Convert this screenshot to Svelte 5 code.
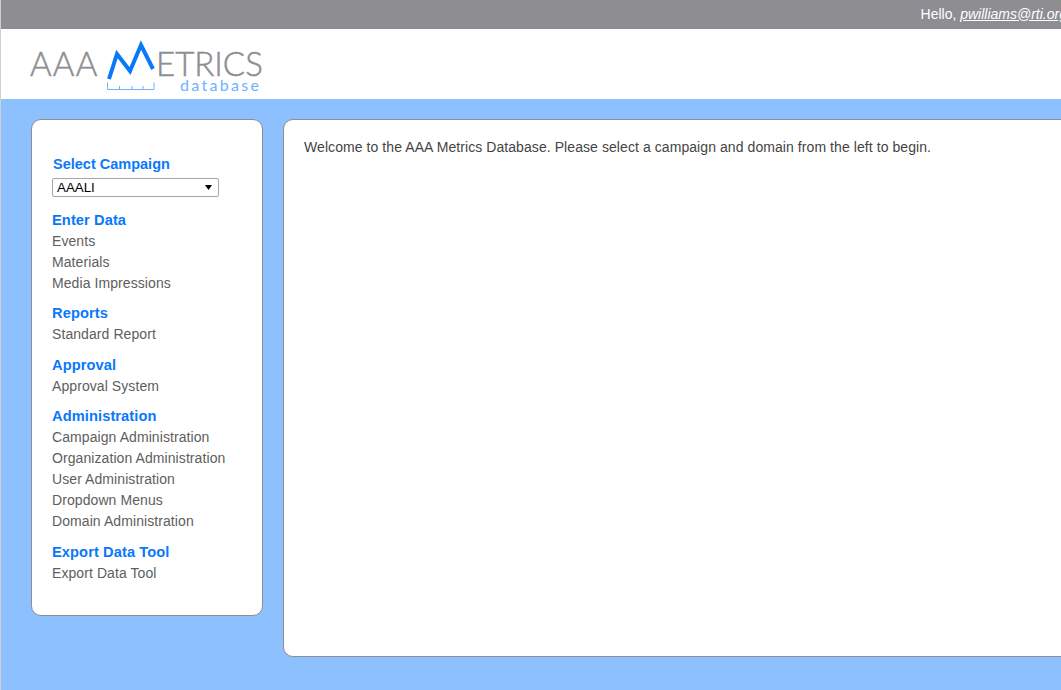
<script lang="ts">
	const sections = [
		{ title: 'Enter Data', links: ['Events', 'Materials', 'Media Impressions'] },
		{ title: 'Reports', links: ['Standard Report'] },
		{ title: 'Approval', links: ['Approval System'] },
		{
			title: 'Administration',
			links: [
				'Campaign Administration',
				'Organization Administration',
				'User Administration',
				'Dropdown Menus',
				'Domain Administration'
			]
		},
		{ title: 'Export Data Tool', links: ['Export Data Tool'] }
	];
</script>

<div class="page">
	<div class="topbar">
		<span class="hello">Hello, <a href="#user">pwilliams@rti.org</a></span>
	</div>

	<header class="header">
		<svg class="logo" width="240" height="60" viewBox="0 0 240 60" aria-label="AAA Metrics database">
			<text x="0" y="34.5" class="grey aaa">AAA</text>
			<text x="126" y="34.5" class="grey">ETRICS</text>
			<text x="150" y="49.5" class="sub">database</text>
			<polyline points="79,38 87,13 100,30 111,4 123,28" class="mark" />
			<path d="M77.5 41.5v7h46.500v-7M89.500 45v3.500M102 45v3.500M113 45v3.500" class="ruler" />
		</svg>
	</header>

	<div class="body">
		<aside class="sidebar">
			<label class="campaign">
				<span class="heading first">Select Campaign</span>
				<span class="select">
					AAALI
					<svg width="7" height="5" viewBox="0 0 7 5"><path d="M0 0h7L3.500 5z" fill="#000" /></svg>
				</span>
			</label>

			{#each sections as s}
				<section>
					<h3 class="heading">{s.title}</h3>
					{#each s.links as l}
						<a class="link" href="#nav">{l}</a>
					{/each}
				</section>
			{/each}
		</aside>

		<main class="panel">
			<p>Welcome to the AAA Metrics Database. Please select a campaign and domain from the left to begin.</p>
		</main>
	</div>
</div>

<style>
	:global(body) {
		margin: 0;
		overflow: hidden;
	}
	.page {
		width: 1061px;
		height: 690px;
		overflow: hidden;
		background: #8cc0ff;
		border-left: 1px solid #d0d0d0;
		box-sizing: border-box;
		font-family: 'Liberation Sans', Arial, sans-serif;
		font-size: 14px;
		color: #555;
	}
	.topbar {
		height: 29px;
		margin-left: -1px;
		background: #8e8d92;
		display: flex;
		justify-content: flex-end;
		align-items: center;
		white-space: nowrap;
		color: #fff;
		padding-bottom: 2px;
		box-sizing: border-box;
	}
	.hello {
		margin-right: -6px;
		font-size: 14px;
	}
	.hello a {
		color: #fff;
		font-style: italic;
		text-decoration: underline;
	}
	.header {
		height: 70px;
		background: #fff;
		padding: 12px 0 0 29px;
		box-sizing: border-box;
	}
	.logo {
		display: block;
		overflow: visible;
	}
	.grey {
		font: 300 33px 'Lato', sans-serif;
		fill: #8e8d92;
		stroke: #8e8d92;
		stroke-width: 0.5px;
	}
	.aaa {
		letter-spacing: 1.2px;
	}
	.sub {
		font: 400 16px 'Lato', sans-serif;
		letter-spacing: 2.3px;
		fill: #6db2ff;
	}
	.mark {
		fill: none;
		stroke: #0a78fa;
		stroke-width: 4;
	}
	.ruler {
		fill: none;
		stroke: #6db2ff;
		stroke-width: 1;
	}
	.body {
		display: flex;
		align-items: flex-start;
		gap: 20px;
		padding: 20px 0 0 30px;
	}
	.sidebar {
		flex: none;
		width: 232px;
		height: 497px;
		box-sizing: border-box;
		padding: 34px 20px 0;
		background: #fff;
		border: 1px solid #8e8d92;
		border-radius: 10px;
	}
	.campaign {
		display: block;
		margin-bottom: 12.75px;
	}
	.heading {
		display: block;
		margin: 0;
		font-size: 14.67px;
		line-height: 21px;
		letter-spacing: 0.08px;
		font-weight: 700;
		color: #0a78fa;
	}
	.first {
		margin-left: 1px;
		font-size: 14.5px;
		line-height: 20px;
		letter-spacing: 0;
	}
	.select {
		display: flex;
		align-items: center;
		justify-content: space-between;
		box-sizing: border-box;
		width: 167px;
		height: 19px;
		margin-top: 4px;
		padding: 0 6px 0 4px;
		border: 1px solid #a6a6a6;
		border-radius: 2px;
		color: #000;
		font-size: 13.33px;
	}
	section {
		margin-top: 9.5px;
	}
	.link {
		display: block;
		height: 21px;
		line-height: 21px;
		letter-spacing: 0.08px;
		color: #5e5e5e;
		text-decoration: none;
	}
	.panel {
		flex: none;
		width: 860px;
		height: 538px;
		box-sizing: border-box;
		background: #fff;
		border: 1px solid #8e8d92;
		border-radius: 10px;
		padding: 18px 20px;
	}
	.panel p {
		margin: 0;
		line-height: 18px;
		letter-spacing: 0.074px;
		color: #444;
	}
</style>
